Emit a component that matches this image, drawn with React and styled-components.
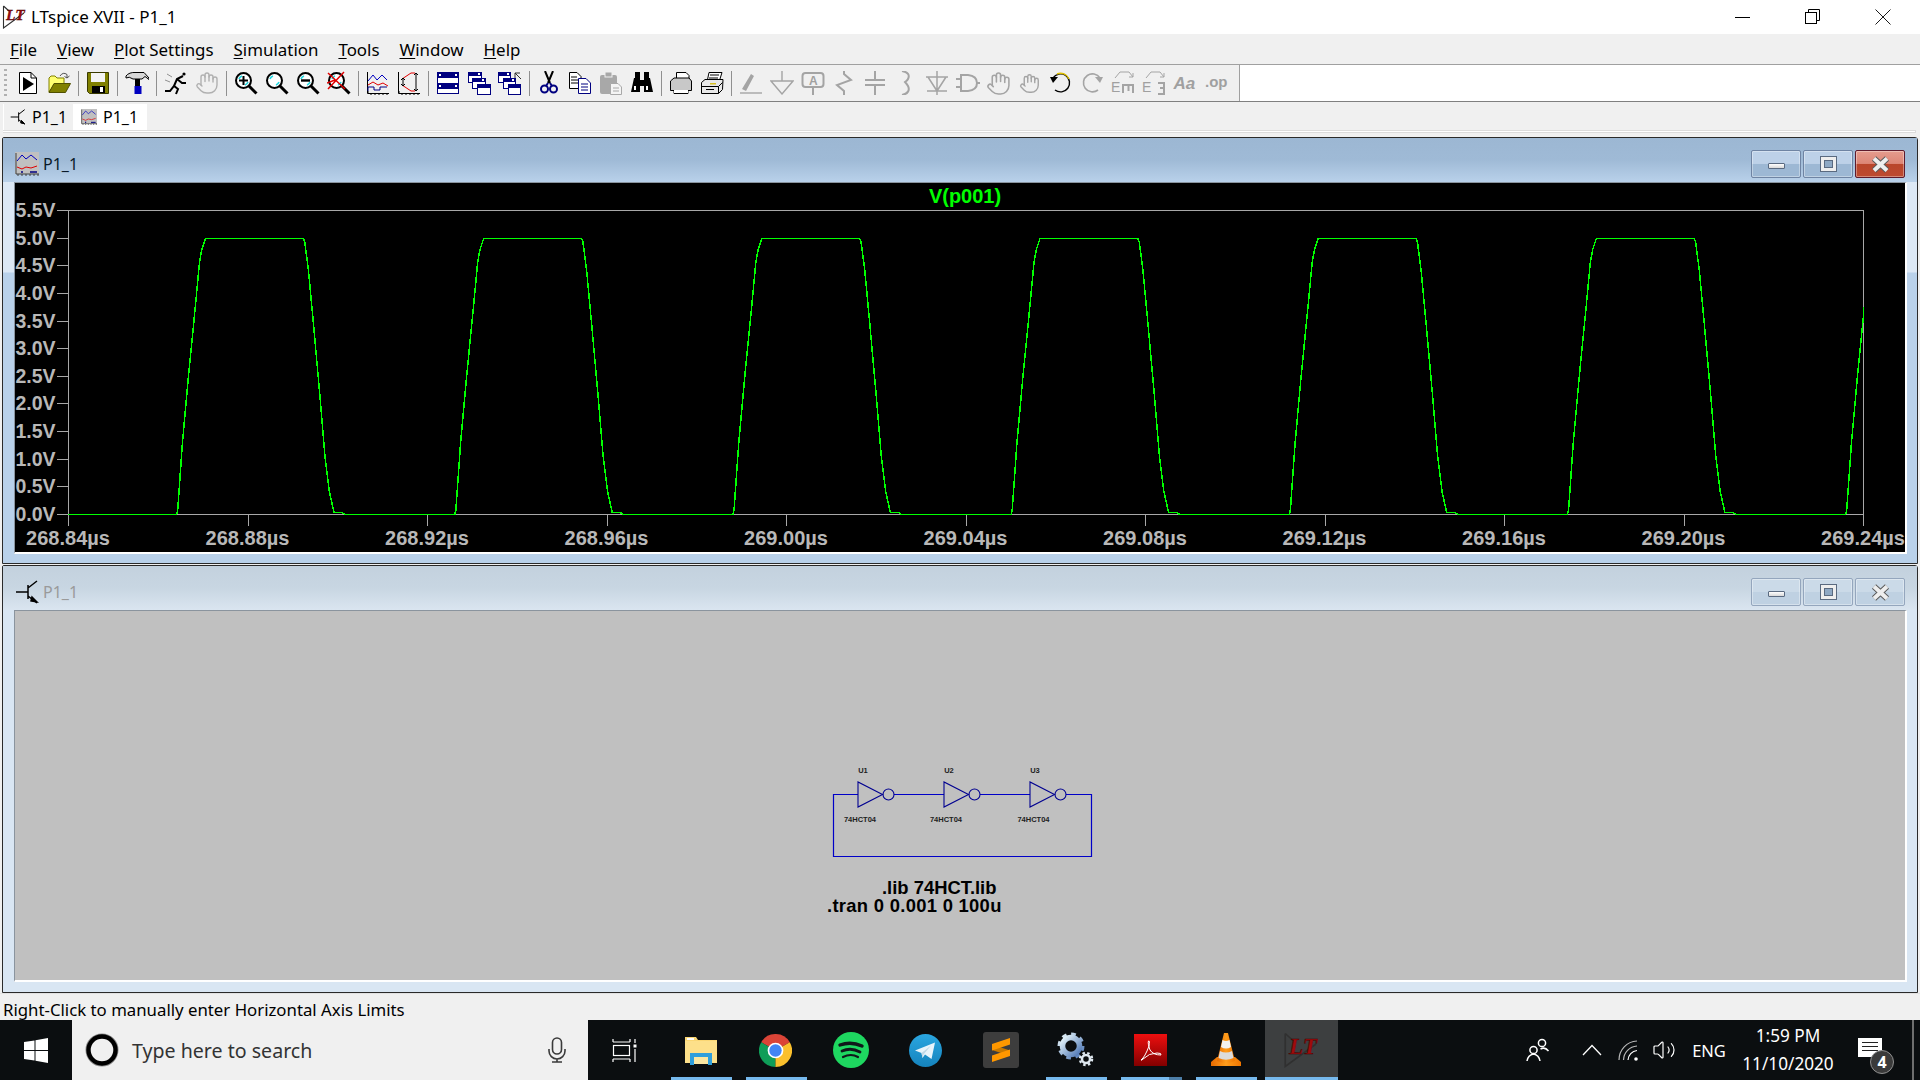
import React from "react";
import styled, { createGlobalStyle } from "styled-components";
import { Hand, Volume2 } from "lucide-react";

const UI_FONT = `"Noto Sans", "Open Sans", sans-serif`;
const PLOT_FONT = `"Liberation Sans", Arial, sans-serif`;

const GlobalStyle = createGlobalStyle`
  html, body {
    margin: 0;
    padding: 0;
    background: #f0f0f0;
    overflow: hidden;
  }
  * { box-sizing: border-box; }
`;

const Screen = styled.div`
  width: 1920px;
  height: 1080px;
  display: flex;
  flex-direction: column;
  overflow: hidden;
  font-family: ${UI_FONT};
  color: #000;
  background: #f0f0f0;
`;

/* ---------- app title bar ---------- */

const TitleBar = styled.header`
  height: 34px;
  flex: none;
  display: flex;
  align-items: center;
  background: #fff;
  padding-left: 2px;
  padding-right: 2px;
`;

const AppTitle = styled.span`
  margin-left: 5px;
  font-size: 17px;
  line-height: 34px;
`;

const Caption = styled.div`
  margin-left: auto;
  display: flex;
`;

const CaptionButton = styled.div`
  width: 70px;
  height: 34px;
  display: flex;
  align-items: center;
  justify-content: center;
`;

const MenuBar = styled.nav`
  height: 31px;
  flex: none;
  display: flex;
  align-items: center;
  gap: 20px;
  padding-left: 10px;
  background: #f0f0f0;
  border-bottom: 1px solid #a0a0a0;
  font-size: 16.9px;
`;

const MenuKey = styled.span`
  text-decoration: underline;
  text-underline-offset: 2px;
  text-decoration-thickness: 1px;
`;

/* ---------- toolbar ---------- */

const ToolRow = styled.div`
  height: 37px;
  flex: none;
  display: flex;
  background: #fff;
  border-bottom: 1px solid #808080;
`;

const ToolArea = styled.div`
  width: 1240px;
  display: flex;
  align-items: center;
  background: #f0f0f0;
  border-right: 1px solid #a0a0a0;
`;

const Grip = styled.div`
  width: 3px;
  height: 28px;
  margin: 0 5px 0 4px;
  background: repeating-linear-gradient(to bottom, #b0b0b0 0 2px, transparent 2px 5px);
`;

const ToolSlot = styled.div`
  width: 31px;
  height: 36px;
  display: flex;
  align-items: center;
  justify-content: center;
  flex: none;
`;

const ToolSep = styled.div`
  width: 1px;
  height: 25px;
  margin: 0 3.5px;
  background: #909090;
  flex: none;
`;

const Ico = styled.svg.attrs({ viewBox: "0 0 24 24" })`
  width: 24px;
  height: 24px;
  fill: none;
  flex: none;
`;

const IconText = styled.text`
  font-family: ${(p) => p.$serif ? `"Liberation Serif", serif` : PLOT_FONT};
  font-weight: ${(p) => p.$weight || 700};
  font-style: ${(p) => p.$italic ? "italic" : "normal"};
  font-size: ${(p) => p.$size}px;
  fill: ${(p) => p.$fill || "#a0a0a0"};
`;

const G = "#a4a4a4";

const Mag = ({ children }) => (
  <Ico>
    <path d="M15 15l7.5 7.5" stroke="#000" strokeWidth="3" />
    <circle cx="9.5" cy="9.5" r="7.5" fill="#fff" stroke="#000" strokeWidth="2" />
    <path d="M5 8a5 5 0 0 1 3-3M14 11a5 5 0 0 1-3 3" stroke="#20d8e0" strokeWidth="1.6" />
    {children}
  </Ico>
);

const MiniWin = ({ x, y, w = 13, h = 10, dot }) => (
  <g>
    <rect x={x + 0.5} y={y + 0.5} width={w} height={h} fill="#fff" stroke="#000080" />
    <rect x={x} y={y} width={w + 1} height="4" fill="#000080" />
    {dot && <rect x={x + w - 3} y={y + 1} width="2" height="2" fill="#fff" />}
  </g>
);

const toolGroups = [
  [
    <Ico key="run">
      <path d="M3.5 1.5H15L20.5 7V22.5H3.5Z" fill="#fff" stroke="#000" />
      <path d="M15 1.5V7H20.5" stroke="#000" />
      <path d="M7 6L18 13L7 20Z" fill="#000" />
    </Ico>,
    <Ico key="open">
      <path d="M2 21V7L4 5H8L10 7H17V14H7Z" fill="#ffff70" stroke="#808000" />
      <path d="M2 21.5L7 12.5H23.5L18.5 21.5Z" fill="#808000" stroke="#505000" />
      <path d="M13 5Q16 0.5 20 3.5L20 7M20 7L17.5 5.5M20 7L22.5 5" stroke="#505050" />
    </Ico>,
  ],
  [
    <Ico key="save">
      <path d="M1.5 1.5H22.5V22.5H3.5L1.5 20.5Z" fill="#808000" stroke="#3a3a00" />
      <rect x="5" y="2" width="14" height="9" fill="#f4f4f4" />
      <rect x="6" y="15" width="13" height="7" fill="#000" />
      <rect x="14" y="16" width="3" height="5" fill="#fff" />
    </Ico>,
  ],
  [
    <Ico key="hammer">
      <path d="M1 5Q4 1 11 1.5H19L24 7V8.5L20 5.5L17 8H8Q4 5 1 7Z" fill="#d8d8d8" stroke="#000" />
      <rect x="10" y="8" width="5" height="10" fill="#000" />
      <rect x="9.5" y="15" width="7" height="8" fill="#0000c0" />
    </Ico>,
  ],
  [
    <Ico key="runner">
      <path d="M1 20H6L10 15L14 18L12 23M10 15L13 8L19 5M13 8L18 12H22" stroke="#000" strokeWidth="2" />
      <circle cx="20" cy="3" r="1.6" fill="#000" />
      <path d="M3 3L8 6M1 9L6 11" stroke="#909090" />
    </Ico>,
    <Hand key="hand1" size={24} color="#b0b0b0" strokeWidth={1.4} />,
  ],
  [
    <Mag key="zin"><path d="M5 9.5H14M9.5 5V14" stroke="#000" strokeWidth="2" /></Mag>,
    <Mag key="zmid" />,
    <Mag key="zout"><path d="M5 9.5H14" stroke="#000" strokeWidth="2.4" /></Mag>,
    <Mag key="zx"><path d="M1 2L18 18M17 1L1 18M0 12L8 9" stroke="#e00000" strokeWidth="1.5" /></Mag>,
  ],
  [
    <Ico key="plot">
      <path d="M1.5 1V22.5H23M1 21H3M5 22V24M9 22V24M13 22V24M17 22V24M21 22V24" stroke="#000" />
      <path d="M2 10L7 4L11 9L16 4L21 9" stroke="#0000c0" />
      <path d="M2 14L7 11L12 14L17 12L22 15" stroke="#e00000" />
      <path d="M2 20V16H8V19H14V16H21" stroke="#000080" />
    </Ico>,
    <Ico key="auto">
      <path d="M1.5 1V22.5H23M1 21H3M5 22V24M9 22V24M13 22V24M17 22V24M21 22V24" stroke="#000" />
      <path d="M5 8L14 2H18M5 14L14 20H18" stroke="#e00000" />
      <path d="M19 2V20M17 4L19 2L21 4M17 18L19 20L21 18M6 7V15M4 9L6 7L8 9M4 13L6 15L8 13" stroke="#000" />
    </Ico>,
  ],
  [
    <Ico key="tile">
      <rect x="1.5" y="1.5" width="21" height="21" fill="#fff" stroke="#000080" />
      <rect x="1" y="1" width="22" height="6" fill="#000080" />
      <rect x="1" y="12" width="22" height="6" fill="#000080" />
      <rect x="3" y="3" width="2" height="2" fill="#fff" />
      <rect x="19" y="3" width="2" height="2" fill="#fff" />
      <rect x="3" y="14" width="2" height="2" fill="#fff" />
      <rect x="19" y="14" width="2" height="2" fill="#fff" />
    </Ico>,
    <Ico key="cascade">
      <MiniWin x={1} y={1} dot />
      <MiniWin x={5} y={7} dot />
      <MiniWin x={10} y={13} />
    </Ico>,
    <Ico key="cascade2">
      <MiniWin x={0} y={1} w={12} dot />
      <MiniWin x={5} y={7} w={12} dot />
      <MiniWin x={10} y={13} w={12} />
      <path d="M17 2H22M17 2V7M17 2L23 8" stroke="#303030" />
    </Ico>,
  ],
  [
    <Ico key="cut">
      <path d="M8 0L13 12M16 0L11 12" stroke="#000" strokeWidth="2" />
      <circle cx="7.5" cy="18" r="3.5" stroke="#000080" strokeWidth="2" />
      <circle cx="16.5" cy="18" r="3.5" stroke="#000080" strokeWidth="2" />
      <path d="M11 12L9 15M13 12L15 15" stroke="#000080" strokeWidth="2" />
    </Ico>,
    <Ico key="copy">
      <path d="M1.5 1.5H9L13 5.5V17.5H1.5Z" fill="#fff" stroke="#000" />
      <path d="M3 6H9M3 9H11M3 12H11" stroke="#000" />
      <path d="M10.5 7.5H18L22.5 12V22.5H10.5Z" fill="#fff" stroke="#000080" />
      <path d="M13 13H20M13 16H20M13 19H20" stroke="#000080" />
    </Ico>,
    <Ico key="paste">
      <rect x="1" y="4" width="17" height="19" rx="2" fill="#a8a8a8" />
      <rect x="6" y="1" width="7" height="5" fill="#a8a8a8" stroke="#f0f0f0" />
      <path d="M11.5 12.5H19L22.5 16V23.5H11.5Z" fill="#f4f4f4" stroke="#a8a8a8" />
      <path d="M14 17H20M14 20H20" stroke="#a8a8a8" />
    </Ico>,
    <Ico key="bino">
      <path d="M1 21L4 7H10V21Z M14 21V7H20L23 21Z" fill="#000" />
      <rect x="5" y="1" width="5" height="6" fill="#000" />
      <rect x="14" y="1" width="5" height="6" fill="#000" />
      <rect x="10" y="9" width="4" height="6" fill="#000" />
      <rect x="4" y="15" width="2" height="4" fill="#fff" />
      <rect x="16" y="15" width="2" height="4" fill="#fff" />
    </Ico>,
  ],
  [
    <Ico key="preview">
      <path d="M7.5 1.5H17L20 4.5V11H7.5Z" fill="#fff" stroke="#000" />
      <path d="M1.5 10L5 7H20L22.5 10V19.5H19V22.5H5V19.5H1.5Z" fill="#c8c8c8" stroke="#000" />
      <rect x="5" y="19" width="14" height="3" fill="#fff" />
    </Ico>,
    <Ico key="print">
      <path d="M7 11L9 1.5H22L19 11Z" fill="#fff" stroke="#000" />
      <path d="M10 4H19M9 7H18" stroke="#000" />
      <path d="M1.5 11.5L5 8.5H23L22.5 18.5L18.5 22.5H1.5Z" fill="#e8e8e8" stroke="#000" />
      <path d="M1.5 15.5H18.5V22.5M18.5 15.5L22.5 11.5M6 18.5H14" stroke="#000" />
      <rect x="10" y="12" width="6" height="1.5" fill="#d8c020" />
    </Ico>,
  ],
  [
    <Ico key="pencil">
      <path d="M3 18L12 3L15 5L7 20Z" fill={G} />
      <path d="M1 22H23" stroke={G} strokeWidth="1.4" />
    </Ico>,
    <Ico key="ground">
      <path d="M12 0V10M1 10H23L12 23Z" stroke={G} strokeWidth="1.4" />
    </Ico>,
    <Ico key="label">
      <rect x="1.5" y="2" width="21" height="14" rx="3" stroke={G} strokeWidth="2" />
      <IconText x="8" y="14" $size={12}>A</IconText>
      <path d="M12 16V24" stroke={G} strokeWidth="2" />
    </Ico>,
    <Ico key="res">
      <path d="M12 0V3L19 9L5 14L12 20V24" stroke={G} strokeWidth="2" />
    </Ico>,
    <Ico key="cap">
      <path d="M12 0V9M2 9H22M2 14H22M12 14V24" stroke={G} strokeWidth="2" />
    </Ico>,
    <Ico key="ind">
      <path d="M8 0C14 1 16 4 14 8C13 10 12 10 11 11C12 12 13 13 14 15C16 19 14 23 8 24" stroke={G} strokeWidth="2" />
    </Ico>,
    <Ico key="diode">
      <path d="M12 0V24M1 6H23M3 6L12 20L21 6M2 20H22" stroke={G} strokeWidth="1.5" />
    </Ico>,
    <Ico key="gate">
      <path d="M5 4H12Q21 5 21 12Q21 19 12 20H5ZM0 8H5M0 16H5M21 12H24" stroke={G} strokeWidth="2" />
    </Ico>,
    <Hand key="hand2" size={25} color={G} strokeWidth={1.5} />,
    <Hand key="hand3" size={21} color={G} strokeWidth={1.6} />,
    <Ico key="undo">
      <path d="M4 7A9 9 0 1 1 6 19" stroke="#000" strokeWidth="1.4" />
      <path d="M8 3A9 9 0 0 1 20 8" stroke="#e0c000" strokeWidth="1.4" />
      <path d="M1 6H9L4 12Z" fill="#000" />
    </Ico>,
    <Ico key="redo">
      <path d="M20 7A9 9 0 1 0 18 19" stroke={G} strokeWidth="1.6" />
      <path d="M23 6H15L20 12Z" fill={G} />
    </Ico>,
    <Ico key="move">
      <IconText x="0" y="20.5" $size={14} $weight={400}>E</IconText>
      <rect x="11" y="13" width="12" height="2" fill={G} />
      <path d="M12 14V22M17.5 14V20M22 14V22" stroke={G} strokeWidth="2" />
      <path d="M4 7L9 1H18L22 6M22 2V6H18" stroke={G} />
    </Ico>,
    <Ico key="drag">
      <IconText x="0" y="20.5" $size={14} $weight={400}>E</IconText>
      <path d="M16 12H22V23H16M18 17H22" stroke={G} strokeWidth="2" />
      <path d="M4 7L9 1H18L22 6M22 2V6H18" stroke={G} />
    </Ico>,
    <Ico key="aa">
      <IconText x="0.5" y="18" $size={17} $italic>Aa</IconText>
    </Ico>,
    <Ico key="op">
      <IconText x="1" y="16" $size={15}>.op</IconText>
    </Ico>,
  ],
];

/* ---------- tabs ---------- */

const TabStrip = styled.div`
  height: 35px;
  flex: none;
  display: flex;
  flex-direction: column;
  background: #f0f0f0;
`;

const TabRow = styled.div`
  height: 28px;
  display: flex;
  align-items: flex-end;
  padding-left: 3px;
`;

const Tab = styled.div`
  width: ${(p) => (p.$active ? 74 : 70)}px;
  height: 26px;
  display: flex;
  align-items: center;
  gap: 6px;
  padding-left: ${(p) => (p.$active ? 7 : 6)}px;
  font-size: 16px;
  background: ${(p) => (p.$active ? "#fff" : "#f0f0f0")};
  border-left: 1px solid #fff;
`;

const TabRule = styled.div`
  height: 3px;
  margin: 0 4px 0 3px;
  background: #fff;
  border-top: 1px solid #dcdcdc;
  border-bottom: 1px solid #dcdcdc;
  border-right: 1px solid #dcdcdc;
`;

const PlotGlyph = ({ size }) => (
  <svg width={size} height={size} viewBox="0 0 24 24" fill="none">
    <rect width="24" height="22" fill="#c0c0c0" />
    <path d="M2 9L7 3L11 7L16 3L22 8" stroke="#0000c0" />
    <path d="M2 15L7 17L11 15L16 16L22 14" stroke="#e00000" />
    <path d="M1 1V22H24M3 22V24M7 22V24M11 22V24M15 22V24M19 22V24M23 22V24" stroke="#404040" />
    <path d="M7 21V19M15 20H22" stroke="#000080" strokeWidth="1.5" />
  </svg>
);

const TransistorGlyph = ({ size }) => (
  <svg width={size} height={size} viewBox="0 0 24 24" fill="none" stroke="#000" strokeWidth="1.5">
    <path d="M1 12H13M13 5V19M13 8L22 1M13 16L22 23" />
    <path d="M17 17L22 22L16 21Z" fill="#000" />
  </svg>
);

const LtLogo = ({ size }) => (
  <svg width={size} height={size} viewBox="0 0 24 24" fill="none">
    <path d="M1.5 1L7 6M1.5 1V23L22 8" stroke="#303030" strokeWidth="1.1" />
    <IconText x="4" y="14.5" $size={15.5} $italic $serif $fill="#a00c0c" stroke="#400000" strokeWidth="0.3">LT</IconText>
  </svg>
);

/* ---------- mdi windows ---------- */

const MdiArea = styled.main`
  flex: none;
  height: 856px;
  display: flex;
  flex-direction: column;
  gap: 1px;
  padding: 0 2px;
`;

const Win = styled.section`
  height: ${(p) => p.$height}px;
  flex: none;
  display: flex;
  flex-direction: column;
  border: 1px solid #2a2a2a;
  border-top-left-radius: 2px;
  border-top-right-radius: 3px;
  padding: 0 10px 0 11px;
  background: ${(p) => p.$active
    ? "linear-gradient(to bottom, #dce8f5 0, #dce8f5 134px, #b9d1ea 135px)"
    : "#d9e6f3"};
`;

const WinTitle = styled.div`
  height: 44px;
  flex: none;
  display: flex;
  align-items: center;
  gap: 4px;
  padding: 8px 12px 0 12px;
  margin: 0 -10px 0 -11px;
  font-size: 16px;
  color: ${(p) => (p.$active ? "#0a1a2a" : "#9a9a9a")};
  background: ${(p) => p.$active
    ? "linear-gradient(to bottom, #9cb7d3, #9fbad6 50%, #b9d1ea)"
    : "linear-gradient(to bottom, #c3d1de, #c8d6e2 50%, #dae5f0)"};
`;

const WinButtons = styled.div`
  margin-left: auto;
  display: flex;
  gap: 2px;
`;

const WinButton = styled.div`
  width: 50px;
  height: 28px;
  display: flex;
  align-items: center;
  justify-content: center;
  border-radius: 2px;
  border: 1px solid ${(p) => (p.$close && p.$active ? "#5e1a2c" : p.$active ? "#6f84a3" : "#94a6bd")};
  background: ${(p) => {
    if (p.$close && p.$active) return "linear-gradient(to bottom, #e59c8e, #dd8676 48%, #b9452b 50%, #bd4a30)";
    if (p.$active) return "linear-gradient(to bottom, #bdd1e8, #bdd1e8 48%, #9db8d4 50%, #9db8d4)";
    return "linear-gradient(to bottom, #cbdae8, #cbdae8 48%, #bfd1e2 50%, #bfd1e2)";
  }};
  box-shadow: inset 0 0 0 1px rgba(255, 255, 255, 0.35);
`;

const MinGlyph = styled.div`
  width: 17px;
  height: 6px;
  margin-top: 3px;
  background: linear-gradient(to bottom, #fff, #d8d8d8);
  border: 1px solid #5a6a80;
  border-radius: 1px;
`;

const MaxGlyph = styled.div`
  width: 17px;
  height: 16px;
  background: #8fa9c4;
  border: 4px solid #eee;
  outline: 1px solid #5a6a80;
  outline-offset: -1px;
  box-shadow: inset 0 0 0 1px #5a6a80;
`;

const CloseGlyph = () => (
  <svg width="19" height="17" viewBox="0 0 19 17" fill="none">
    <path d="M3 2.5L16 14.5M16 2.5L3 14.5" stroke="#5a5a5a" strokeWidth="6" />
    <path d="M3 2.5L16 14.5M16 2.5L3 14.5" stroke="#eee" strokeWidth="4" />
  </svg>
);

const Pane = styled.div`
  height: 372px;
  flex: none;
  border-top: 1px solid #8a949e;
  border-left: 1px solid #8a949e;
  border-right: 2px solid #fff;
  border-bottom: 2px solid #fff;
  background: ${(p) => p.$bg};
`;

const Drawing = styled.svg`
  display: block;
  width: 1890px;
  height: 369px;
`;

const AxisLabel = styled.text`
  font-family: ${PLOT_FONT};
  font-weight: 700;
  font-size: ${(p) => p.$size || 19.5}px;
  fill: #b8b8b8;
  text-anchor: ${(p) => p.$anchor};
`;

const TraceLabel = styled(AxisLabel)`
  fill: #00ff00;
  text-anchor: middle;
`;

const PartLabel = styled.text`
  font-family: ${PLOT_FONT};
  font-weight: 700;
  font-size: 7.5px;
  fill: #202020;
  text-anchor: middle;
`;

const Directive = styled.text`
  font-family: ${PLOT_FONT};
  font-weight: 700;
  font-size: 18.4px;
  letter-spacing: ${(p) => p.$spacing || 0}px;
  fill: #000;
`;

const AXIS = { left: 68, right: 1863, top: 210, zero: 514 };
const voltages = ["5.5V", "5.0V", "4.5V", "4.0V", "3.5V", "3.0V", "2.5V", "2.0V", "1.5V", "1.0V", "0.5V", "0.0V"];
const times = ["268.84", "268.88", "268.92", "268.96", "269.00", "269.04", "269.08", "269.12", "269.16", "269.20", "269.24"];
const PULSE = [
  [0, 514.3], [1, 510], [5.7, 443.3], [11.7, 376.7], [18.3, 310], [22.7, 263.3], [25, 250], [28.7, 238.7],
  [126.7, 238.7], [128, 241.7], [131.7, 270], [136.7, 323.3], [143.3, 396.7], [148.3, 456.7], [152.7, 491.7],
  [157.3, 512.3], [165, 512.3], [168.3, 514.3],
];

const tracePoints = () => {
  const pts = [[AXIS.left, 514.3]];
  for (let k = 0; k < 7; k++) {
    const start = 176.7 + k * 278.17;
    PULSE.forEach(([dx, y]) => pts.push([start + dx, y]));
  }
  return pts.map((p) => p.join(",")).join(" ");
};

const voltY = (i) => AXIS.top + (i * (AXIS.zero - AXIS.top)) / 11;
const timeX = (i) => AXIS.left + (i * (AXIS.right - AXIS.left)) / 10;

const PlotChart = () => (
  <Drawing viewBox="15 183 1890 369">
    <defs>
      <clipPath id="plotClip">
        <rect x={AXIS.left} y={AXIS.top} width={AXIS.right - AXIS.left + 1} height={AXIS.zero - AXIS.top + 2} />
      </clipPath>
    </defs>
    <rect x={AXIS.left + 0.5} y={AXIS.top + 0.5} width={AXIS.right - AXIS.left} height={AXIS.zero - AXIS.top} fill="none" stroke="#a8a8a8" />
    {voltages.map((v, i) => (
      <g key={v}>
        <path d={`M57 ${Math.round(voltY(i)) + 0.5}H68`} stroke="#a8a8a8" />
        <AxisLabel x="55.5" y={voltY(i) + 7} $anchor="end">{v}</AxisLabel>
      </g>
    ))}
    {times.map((t, i) => (
      <g key={t}>
        <path d={`M${Math.round(timeX(i)) + 0.5} 514V526`} stroke="#a8a8a8" />
        <AxisLabel x={timeX(i)} y="545" $anchor="middle" $size={20}>{t}µs</AxisLabel>
      </g>
    ))}
    <polyline points={tracePoints()} fill="none" stroke="#00ff00" strokeWidth="1.5" shapeRendering="crispEdges" clipPath="url(#plotClip)" />
    <TraceLabel x="965" y="203" $size={20}>V(p001)</TraceLabel>
  </Drawing>
);

const Inverter = ({ x, name, part, partX }) => (
  <g>
    <path d={`M${x} 782V807L${x + 24.5} 794.5Z`} fill="none" stroke="#000090" strokeWidth="1.1" />
    <circle cx={x + 30.5} cy="794.5" r="5.5" fill="none" stroke="#000090" strokeWidth="1.1" />
    <PartLabel x={x + 5} y="773">{name}</PartLabel>
    <PartLabel x={partX} y="822">{part}</PartLabel>
  </g>
);

const Schematic = () => (
  <Drawing viewBox="15 611 1890 369">
    <path d="M858 794.5H833.5V856.5H1091.5V794.5H1066M894 794.5H944M980 794.5H1030" fill="none" stroke="#0000c8" strokeWidth="1.2" />
    <Inverter x={858} name="U1" part="74HCT04" partX={860} />
    <Inverter x={944} name="U2" part="74HCT04" partX={946} />
    <Inverter x={1030} name="U3" part="74HCT04" partX={1033.5} />
    <Directive x="882" y="893.5">.lib 74HCT.lib</Directive>
    <Directive x="827" y="912" $spacing={0.3}>.tran 0 0.001 0 100u</Directive>
  </Drawing>
);

/* ---------- status + taskbar ---------- */

const StatusBar = styled.footer`
  height: 27px;
  flex: none;
  display: flex;
  align-items: center;
  padding: 4px 0 0 3px;
  font-size: 16.8px;
  background: #f0f0f0;
  border-top: 1px solid #e2e2e2;
`;

const Taskbar = styled.div`
  height: 60px;
  flex: none;
  display: flex;
  align-items: stretch;
  background: #0b0e10;
  color: #fff;
`;

const StartButton = styled.div`
  width: 72px;
  display: flex;
  align-items: center;
  justify-content: center;
`;

const SearchBox = styled.div`
  width: 516px;
  display: flex;
  align-items: center;
  gap: 13px;
  padding: 0 22px 0 13px;
  background: #f0f0f0;
  color: #333;
  font-size: 19.6px;
`;

const SearchMic = styled.span`
  margin-left: auto;
  display: flex;
`;

const TaskView = styled.div`
  width: 76px;
  display: flex;
  align-items: center;
  justify-content: center;
  padding-right: 3px;
`;

const TaskSlot = styled.div`
  position: relative;
  width: 75px;
  display: flex;
  align-items: center;
  justify-content: center;
  padding-right: 2px;

  ${(p) => p.$active && `
    &::before {
      content: "";
      position: absolute;
      inset: 0 1px;
      background: #3d3f40;
    }
  `}

  ${(p) => p.$running && `
    &::after {
      content: "";
      position: absolute;
      left: ${p.$active ? 1 : 7}px;
      right: ${p.$active ? 1 : 7}px;
      bottom: 0;
      height: 3px;
      background: ${p.$stacked ? "linear-gradient(to right, #76b9ed 0 79%, #4d7ea8 79%)" : "#76b9ed"};
    }
  `}

  svg { position: relative; }
`;

const Tray = styled.div`
  margin-left: auto;
  width: 402px;
  display: flex;
  align-items: center;
`;

const TrayItem = styled.div`
  width: ${(p) => p.$w}px;
  height: 100%;
  flex: none;
  display: flex;
  align-items: center;
  justify-content: center;
  font-size: ${(p) => p.$size || 16}px;
`;

const Clock = styled.div`
  width: 102px;
  flex: none;
  display: flex;
  flex-direction: column;
  align-items: center;
  gap: 4px;
  font-size: 17.2px;
  line-height: 24px;
  white-space: nowrap;
`;

const Notify = styled.div`
  position: relative;
  width: 62px;
  height: 100%;
  flex: none;
`;

const Bubble = styled.div`
  position: absolute;
  left: 19px;
  top: 18px;
  width: 24px;
  height: 19px;
  background: #fff;
  padding: 4px 4px;
  display: flex;
  flex-direction: column;
  gap: 3px;
`;

const BubbleLine = styled.div`
  height: 1px;
  background: #222;
`;

const Badge = styled.div`
  position: absolute;
  left: 31px;
  top: 30px;
  width: 24px;
  height: 24px;
  border-radius: 50%;
  background: #3a3a3a;
  border: 1px solid #909090;
  display: flex;
  align-items: center;
  justify-content: center;
  font-size: 16px;
  font-weight: 700;
`;

const PeekLine = styled.div`
  width: 2px;
  height: 100%;
  margin-left: 11px;
  background: #6e6e6e;
`;

const FolderIcon = () => (
  <svg width="34" height="32" viewBox="0 0 34 32">
    <path d="M1 3H12L14 6H33V29H1Z" fill="#fbd774" />
    <rect x="1" y="7" width="32" height="22" fill="#fde08a" />
    <rect x="3" y="4" width="7" height="2" fill="#fff" />
    <path d="M6 31V19H28V31H24V24H10V31Z" fill="#2f9fdc" />
    <rect x="10" y="23" width="14" height="7" fill="#fbe7a2" />
  </svg>
);

const ChromeIcon = () => (
  <svg width="33" height="33" viewBox="0 0 32 32">
    <path d="M16 16L2.14 8A16 16 0 0 1 29.86 8Z" fill="#db4437" />
    <path d="M16 16L2.14 8A16 16 0 0 0 16 32Z" fill="#0f9d58" />
    <path d="M16 16L29.86 8A16 16 0 0 1 16 32Z" fill="#fbc02d" />
    <circle cx="16" cy="16" r="7.6" fill="#fff" />
    <circle cx="16" cy="16" r="6" fill="#4285f4" />
  </svg>
);

const SpotifyIcon = () => (
  <svg width="36" height="36" viewBox="0 0 36 36" fill="none">
    <circle cx="18" cy="18" r="18" fill="#1ed760" />
    <path d="M7 13Q18 9 29 14" stroke="#10181a" strokeWidth="3.4" strokeLinecap="round" />
    <path d="M9 19Q18 15 27 20" stroke="#10181a" strokeWidth="2.8" strokeLinecap="round" />
    <path d="M10 25Q18 21 25 25" stroke="#10181a" strokeWidth="2.2" strokeLinecap="round" />
  </svg>
);

const TelegramIcon = () => (
  <svg width="33" height="33" viewBox="0 0 33 33">
    <defs>
      <linearGradient id="tg" x1="0" y1="0" x2="0" y2="1">
        <stop offset="0" stopColor="#2aa6e0" />
        <stop offset="1" stopColor="#1583bd" />
      </linearGradient>
    </defs>
    <circle cx="16.5" cy="16.5" r="16.5" fill="url(#tg)" />
    <path d="M6 16.5L26 8.5L22.5 25L16 20.5L13.5 24L12.5 19Z" fill="#e8f4fb" />
    <path d="M12.5 19L22 11.5L14.5 20.5L13.5 24Z" fill="#c0d8e6" />
  </svg>
);

const SublimeIcon = () => (
  <svg width="36" height="36" viewBox="0 0 36 36">
    <rect width="36" height="36" rx="3" fill="#3d3d3d" />
    <path d="M9 12.5L27 18.5V24L9 18Z" fill="#c97a00" />
    <path d="M27 6L9 12V18.5L27 12.5Z" fill="#ff9800" />
    <path d="M27 17.5L9 23.5V30L27 24Z" fill="#ff9800" />
  </svg>
);

const GearsIcon = () => (
  <svg width="38" height="36" viewBox="0 0 38 36" fill="none">
    <defs>
      <linearGradient id="gear" x1="0" y1="0" x2="1" y2="1">
        <stop offset="0" stopColor="#e8f6fb" />
        <stop offset="1" stopColor="#4f77b5" />
      </linearGradient>
    </defs>
    <circle cx="14" cy="14" r="11.5" stroke="url(#gear)" strokeWidth="4" strokeDasharray="4.5 4.5" />
    <circle cx="14" cy="14" r="8.5" stroke="url(#gear)" strokeWidth="5.5" />
    <circle cx="29" cy="27" r="6" stroke="#dfe8f0" strokeWidth="2.5" strokeDasharray="2.4 2.4" />
    <circle cx="29" cy="27" r="4" stroke="#dfe8f0" strokeWidth="2.5" />
  </svg>
);

const AdobeIcon = () => (
  <svg width="33" height="32" viewBox="0 0 33 32" fill="none">
    <defs>
      <linearGradient id="pdf" x1="0" y1="0" x2="0" y2="1">
        <stop offset="0" stopColor="#ee0f0f" />
        <stop offset="1" stopColor="#820000" />
      </linearGradient>
    </defs>
    <rect width="33" height="32" fill="url(#pdf)" />
    <path d="M7 26Q11 23 15 12Q16 6 14.5 7Q13.5 9 16 16Q19 21 27 21Q28 19 23 19Q15 19 9 25Q7 27 7 26Z" stroke="#fff" strokeWidth="1" />
  </svg>
);

const VlcIcon = () => (
  <svg width="30" height="34" viewBox="0 0 30 34">
    <defs>
      <linearGradient id="cone" x1="0" y1="0" x2="1" y2="0">
        <stop offset="0" stopColor="#e86a00" />
        <stop offset="0.5" stopColor="#ff9d1c" />
        <stop offset="1" stopColor="#ef7500" />
      </linearGradient>
    </defs>
    <path d="M0 29L6 24H24L30 29V33H0Z" fill="url(#cone)" />
    <path d="M13 0H17L24 28Q15 32 6 28Z" fill="url(#cone)" />
    <path d="M11.5 7Q15 9 18.5 7L20 14Q15 17 10 14Z" fill="#f2f2f2" />
    <path d="M9 18Q15 21 21 18L22.5 25Q15 28.5 7.5 25Z" fill="#dcdcdc" />
  </svg>
);

const taskIcons = [
  { icon: <FolderIcon />, running: true },
  { icon: <ChromeIcon />, running: true },
  { icon: <SpotifyIcon /> },
  { icon: <TelegramIcon /> },
  { icon: <SublimeIcon /> },
  { icon: <GearsIcon />, running: true },
  { icon: <AdobeIcon />, running: true, stacked: true },
  { icon: <VlcIcon />, running: true },
  { icon: <LtLogo size={36} />, running: true, active: true },
];

const menus = [["F", "ile"], ["V", "iew"], ["P", "lot Settings"], ["S", "imulation"], ["T", "ools"], ["W", "indow"], ["H", "elp"]];

const Window = ({ height, active, icon, title, bg, children }) => (
  <Win $height={height} $active={active}>
    <WinTitle $active={active}>
      {icon}
      <span>{title}</span>
      <WinButtons>
        <WinButton $active={active}><MinGlyph /></WinButton>
        <WinButton $active={active}><MaxGlyph /></WinButton>
        <WinButton $active={active} $close><CloseGlyph /></WinButton>
      </WinButtons>
    </WinTitle>
    <Pane $bg={bg}>{children}</Pane>
  </Win>
);

export default function App() {
  return (
    <Screen>
      <GlobalStyle />
      <TitleBar>
        <LtLogo size={24} />
        <AppTitle>LTspice XVII - P1_1</AppTitle>
        <Caption>
          <CaptionButton>
            <svg width="16" height="16" viewBox="0 0 16 16"><path d="M0 8.5H15" stroke="#000" /></svg>
          </CaptionButton>
          <CaptionButton>
            <svg width="16" height="16" viewBox="0 0 16 16" fill="none" stroke="#000">
              <path d="M3.5 3.5V0.5H14.5V11.5H11.5" />
              <rect x="0.5" y="3.5" width="11" height="11" />
            </svg>
          </CaptionButton>
          <CaptionButton>
            <svg width="16" height="16" viewBox="0 0 16 16"><path d="M0.5 0.5L15.5 15.5M15.5 0.5L0.5 15.5" stroke="#000" strokeWidth="0.9" /></svg>
          </CaptionButton>
        </Caption>
      </TitleBar>

      <MenuBar>
        {menus.map(([key, rest]) => (
          <span key={key}><MenuKey>{key}</MenuKey>{rest}</span>
        ))}
      </MenuBar>

      <ToolRow>
        <ToolArea>
          <Grip />
          {toolGroups.map((group, i) => (
            <React.Fragment key={i}>
              {i > 0 && <ToolSep />}
              {group.map((icon, j) => <ToolSlot key={j}>{icon}</ToolSlot>)}
            </React.Fragment>
          ))}
        </ToolArea>
      </ToolRow>

      <TabStrip>
        <TabRow>
          <Tab><TransistorGlyph size={16} />P1_1</Tab>
          <Tab $active><PlotGlyph size={16} />P1_1</Tab>
        </TabRow>
        <TabRule />
      </TabStrip>

      <MdiArea>
        <Window height={427} active icon={<PlotGlyph size={24} />} title="P1_1" bg="#000">
          <PlotChart />
        </Window>
        <Window height={428} icon={<TransistorGlyph size={24} />} title="P1_1" bg="#c0c0c0">
          <Schematic />
        </Window>
      </MdiArea>

      <StatusBar>Right-Click to manually enter Horizontal Axis Limits</StatusBar>

      <Taskbar>
        <StartButton>
          <svg width="24" height="25" viewBox="0 0 24 25" fill="#fff">
            <path d="M0 4L10.5 2.4V12H0Z" />
            <path d="M11.5 2.2L24 0V12H11.5Z" />
            <path d="M0 13H10.5V22.6L0 21Z" />
            <path d="M11.5 13H24V25L11.5 22.8Z" />
          </svg>
        </StartButton>
        <SearchBox>
          <svg width="34" height="34" viewBox="0 0 34 34" fill="none">
            <circle cx="17" cy="17" r="15.5" stroke="#8a8a8a" strokeWidth="2" />
            <circle cx="17" cy="17" r="13.5" stroke="#000" strokeWidth="4.4" />
          </svg>
          Type here to search
          <SearchMic>
            <svg width="18" height="26" viewBox="0 0 18 26" fill="none" stroke="#3a3a3a" strokeWidth="1.6">
              <rect x="4.5" y="1" width="9" height="16" rx="4.5" />
              <path d="M1 12V14A8 8 0 0 0 17 14V12M9 22V25M4 25H14" />
            </svg>
          </SearchMic>
        </SearchBox>
        <TaskView>
          <svg width="25" height="25" viewBox="0 0 25 25" fill="none" stroke="#fff" strokeWidth="1.2">
            <path d="M1 4H18M18 1V4M1 1V4" />
            <rect x="1.5" y="7.5" width="16" height="10" />
            <path d="M1 21H18M1 24V21M18 24V21" />
            <path d="M23 1V5M23 11V24" />
            <rect x="21.5" y="6.5" width="3" height="3" fill="#fff" stroke="none" />
          </svg>
        </TaskView>
        {taskIcons.map((t, i) => (
          <TaskSlot key={i} $running={t.running} $active={t.active} $stacked={t.stacked}>{t.icon}</TaskSlot>
        ))}
        <Tray>
          <TrayItem $w={40}>
            <svg width="24" height="24" viewBox="0 0 24 24" fill="none" stroke="#fff" strokeWidth="1.5">
              <circle cx="7.5" cy="12" r="3.6" />
              <circle cx="16" cy="5" r="3.6" />
              <path d="M1 23Q2 17 7.5 16Q13 17 14 23M14.5 11Q19 8.5 22.5 13" />
            </svg>
          </TrayItem>
          <TrayItem $w={16} />
          <TrayItem $w={36}>
            <svg width="20" height="12" viewBox="0 0 20 12" fill="none" stroke="#fff" strokeWidth="1.3">
              <path d="M1 11L10 1.5L19 11" />
            </svg>
          </TrayItem>
          <TrayItem $w={37}>
            <svg width="22" height="22" viewBox="0 0 22 22" fill="none" stroke="#b8b8b8" strokeWidth="1.2">
              <path d="M1 21A19 19 0 0 1 19 2" />
              <path d="M5.5 21A14.5 14.5 0 0 1 19 7" />
              <path d="M10 21A10 10 0 0 1 19 11.5" stroke="#fff" />
              <circle cx="18" cy="20" r="1.8" fill="#fff" stroke="none" />
            </svg>
          </TrayItem>
          <TrayItem $w={34}>
            <Volume2 size={24} color="#fff" strokeWidth={1.2} />
          </TrayItem>
          <TrayItem $w={56} $size={16.5}>ENG</TrayItem>
          <Clock>
            <span>1:59 PM</span>
            <span>11/10/2020</span>
          </Clock>
          <Notify>
            <Bubble>
              <BubbleLine />
              <BubbleLine />
              <BubbleLine />
            </Bubble>
            <Badge>4</Badge>
          </Notify>
          <PeekLine />
        </Tray>
      </Taskbar>
    </Screen>
  );
}
